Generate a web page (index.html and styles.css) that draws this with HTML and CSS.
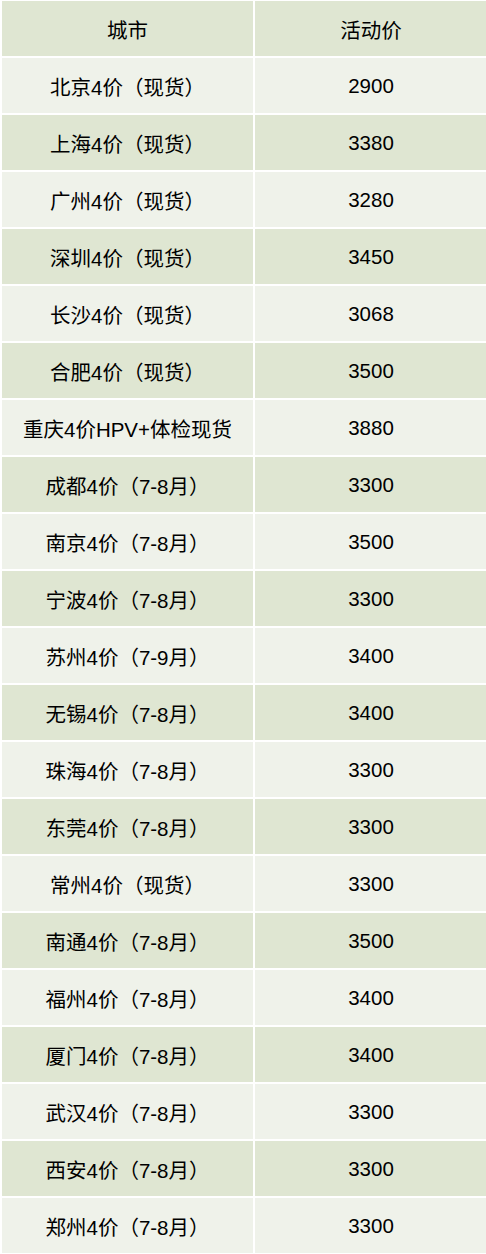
FILE: index.html
```html
<!DOCTYPE html>
<html lang="zh-CN">
<head>
<meta charset="utf-8">
<link rel="stylesheet" href="styles.css">
</head>
<body>
<table class="price-table">
  <colgroup><col class="col-city"><col class="col-price"></colgroup>
  <thead>
    <tr class="dark"><th>城市</th><th>活动价</th></tr>
  </thead>
  <tbody>
    <tr class="light"><td>北京4价（现货）</td><td>2900</td></tr>
    <tr class="dark"><td>上海4价（现货）</td><td>3380</td></tr>
    <tr class="light"><td>广州4价（现货）</td><td>3280</td></tr>
    <tr class="dark"><td>深圳4价（现货）</td><td>3450</td></tr>
    <tr class="light"><td>长沙4价（现货）</td><td>3068</td></tr>
    <tr class="dark"><td>合肥4价（现货）</td><td>3500</td></tr>
    <tr class="light"><td>重庆4价HPV+体检现货</td><td>3880</td></tr>
    <tr class="dark"><td>成都4价（7-8月）</td><td>3300</td></tr>
    <tr class="light"><td>南京4价（7-8月）</td><td>3500</td></tr>
    <tr class="dark"><td>宁波4价（7-8月）</td><td>3300</td></tr>
    <tr class="light"><td>苏州4价（7-9月）</td><td>3400</td></tr>
    <tr class="dark"><td>无锡4价（7-8月）</td><td>3400</td></tr>
    <tr class="light"><td>珠海4价（7-8月）</td><td>3300</td></tr>
    <tr class="dark"><td>东莞4价（7-8月）</td><td>3300</td></tr>
    <tr class="light"><td>常州4价（现货）</td><td>3300</td></tr>
    <tr class="dark"><td>南通4价（7-8月）</td><td>3500</td></tr>
    <tr class="light"><td>福州4价（7-8月）</td><td>3400</td></tr>
    <tr class="dark"><td>厦门4价（7-8月）</td><td>3400</td></tr>
    <tr class="light"><td>武汉4价（7-8月）</td><td>3300</td></tr>
    <tr class="dark"><td>西安4价（7-8月）</td><td>3300</td></tr>
    <tr class="light"><td>郑州4价（7-8月）</td><td>3300</td></tr>
  </tbody>
</table>
</body>
</html>
```
FILE: styles.css
```css
html, body {
  margin: 0;
  padding: 0;
  background: #ffffff;
  overflow: hidden;
}
body {
  font-family: "Liberation Sans", "Noto Sans CJK SC", sans-serif;
  color: #000000;
}
.price-table {
  table-layout: fixed;
  width: 489px;
  border-collapse: separate;
  border-spacing: 2px;
  margin-top: -1px;
}
.col-city { width: 251px; }
.col-price { width: 232px; }
.price-table th,
.price-table td {
  height: 55px;
  padding: 0;
  box-sizing: border-box;
  text-align: center;
  vertical-align: middle;
  font-size: 20.5px;
  font-weight: normal;
  white-space: nowrap;
}
.dark th, .dark td { background: #dfe6d2; }
.light td { background: #eff2ea; }
```
